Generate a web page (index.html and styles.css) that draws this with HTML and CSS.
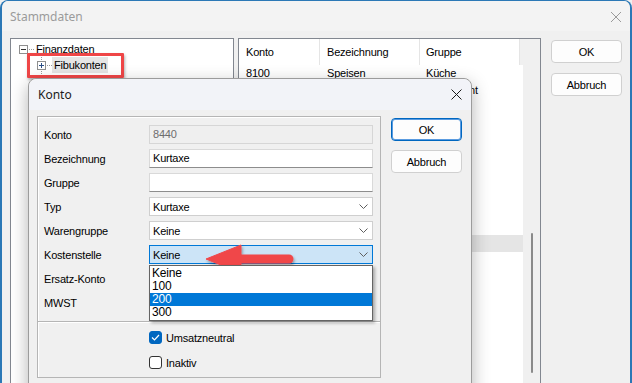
FILE: index.html
```html
<!DOCTYPE html>
<html lang="de">
<head>
    <meta charset="UTF-8">
    <meta name="viewport" content="width=device-width, initial-scale=1.0">
    <title>Stammdaten</title>
    <link rel="stylesheet" href="styles.css">
</head>
<body>
    <div class="window">
        <div class="titlebar">
            <span class="title">Stammdaten</span>
            <svg class="close-icon" width="12" height="12" viewBox="0 0 12 12"><path d="M1 1L11 11M11 1L1 11" stroke="#9a9a9a" stroke-width="1"/></svg>
        </div>
        <div class="window-body">
            <div class="tree">
                <div class="tree-item level-0">
                    <span class="gutter">
                        <svg width="9" height="9" viewBox="0 0 9 9"><rect x="0.5" y="0.5" width="8" height="8" fill="#fff" stroke="#8f8f8f"/><path d="M2 4.5H7" stroke="#333"/></svg>
                    </span>
                    <span class="stub"></span>
                    <span class="tree-label">Finanzdaten</span>
                </div>
                <div class="tree-item level-1">
                    <span class="gutter line">
                        <svg width="9" height="9" viewBox="0 0 9 9"><rect x="0.5" y="0.5" width="8" height="8" fill="#fff" stroke="#8f8f8f"/><path d="M2 4.5H7M4.5 2V7" stroke="#2b4f86"/></svg>
                    </span>
                    <span class="stub"></span>
                    <span class="tree-label selected">Fibukonten</span>
                </div>
                <div class="tree-item level-1">
                    <span class="gutter line">
                        <svg width="9" height="9" viewBox="0 0 9 9"><rect x="0.5" y="0.5" width="8" height="8" fill="#fff" stroke="#8f8f8f"/><path d="M2 4.5H7M4.5 2V7" stroke="#2b4f86"/></svg>
                    </span>
                    <span class="stub"></span>
                    <span class="tree-label"></span>
                </div>
            </div>

            <div class="list">
                <div class="list-main">
                    <div class="list-head">
                        <span class="cell col-1">Konto</span>
                        <span class="cell col-2">Bezeichnung</span>
                        <span class="cell col-3">Gruppe</span>
                        <span class="head-filler"></span>
                    </div>
                    <div class="list-row"><span class="cell col-1">8100</span><span class="cell col-2">Speisen</span><span class="cell col-3">Küche</span></div>
                    <div class="list-row"><span class="cell col-1"></span><span class="cell col-2"></span><span class="cell col-3">Restaurant</span></div>
                    <div class="list-row"></div>
                    <div class="list-row"></div>
                    <div class="list-row"></div>
                    <div class="list-row"></div>
                    <div class="list-row"></div>
                    <div class="list-row"></div>
                    <div class="list-row"></div>
                    <div class="list-row"></div>
                    <div class="list-row selected"></div>
                </div>
                <div class="scrollbar">
                    <div class="scroll-thumb"></div>
                </div>
            </div>

            <div class="side-buttons">
                <button class="win-button">OK</button>
                <button class="win-button">Abbruch</button>
            </div>
        </div>
    </div>

    <div class="annotation-box"></div>

    <div class="dialog">
        <div class="dialog-title">
            <span>Konto</span>
            <svg width="11" height="11" viewBox="0 0 11 11"><path d="M0.5 0.5L10.5 10.5M10.5 0.5L0.5 10.5" stroke="#1b1b1b" stroke-width="1"/></svg>
        </div>
        <div class="dialog-body">
            <div class="group">
                <div class="form-row">
                    <label class="form-label">Konto</label>
                    <div class="field disabled">8440</div>
                </div>
                <div class="form-row">
                    <label class="form-label">Bezeichnung</label>
                    <div class="field">Kurtaxe</div>
                </div>
                <div class="form-row">
                    <label class="form-label">Gruppe</label>
                    <div class="field"></div>
                </div>
                <div class="form-row">
                    <label class="form-label">Typ</label>
                    <div class="combo"><span>Kurtaxe</span><svg width="9" height="5" viewBox="0 0 9 5"><path d="M0.5 0.5L4.5 4.5L8.5 0.5" fill="none" stroke="#5f5f5f"/></svg></div>
                </div>
                <div class="form-row">
                    <label class="form-label">Warengruppe</label>
                    <div class="combo"><span>Keine</span><svg width="9" height="5" viewBox="0 0 9 5"><path d="M0.5 0.5L4.5 4.5L8.5 0.5" fill="none" stroke="#5f5f5f"/></svg></div>
                </div>
                <div class="form-row open">
                    <label class="form-label">Kostenstelle</label>
                    <div class="combo focused"><span>Keine</span><svg width="9" height="5" viewBox="0 0 9 5"><path d="M0.5 0.5L4.5 4.5L8.5 0.5" fill="none" stroke="#5f5f5f"/></svg></div>
                    <div class="dropdown">
                        <div class="dropdown-item">Keine</div>
                        <div class="dropdown-item">100</div>
                        <div class="dropdown-item active">200</div>
                        <div class="dropdown-item">300</div>
                    </div>
                </div>
                <div class="form-row">
                    <label class="form-label">Ersatz-Konto</label>
                    <div class="combo"><span></span></div>
                </div>
                <div class="form-row">
                    <label class="form-label">MWST</label>
                    <div class="combo"><span></span></div>
                </div>
                <div class="separator"></div>
                <div class="check-list">
                    <div class="check-row">
                        <span class="checkbox checked"><svg width="9" height="7" viewBox="0 0 9 7"><path d="M1 3.5L3.5 6L8 1" fill="none" stroke="#fff" stroke-width="1.2"/></svg></span>
                        <span>Umsatzneutral</span>
                    </div>
                    <div class="check-row">
                        <span class="checkbox"></span>
                        <span>Inaktiv</span>
                    </div>
                </div>
            </div>
            <div class="dialog-buttons">
                <button class="win-button default">OK</button>
                <button class="win-button">Abbruch</button>
            </div>
        </div>
    </div>

    <svg class="annotation-arrow" width="632" height="383" viewBox="0 0 632 383">
        <defs>
            <filter id="arrow-shadow" x="-10%" y="-50%" width="130%" height="200%">
                <feDropShadow dx="1" dy="2" stdDeviation="1.5" flood-color="#000" flood-opacity="0.35"/>
            </filter>
        </defs>
        <g filter="url(#arrow-shadow)" fill="#f0474a" stroke="#f0474a">
            <path d="M236 259H289" stroke-width="9" stroke-linecap="round"/>
            <path d="M206 259L241 245L241 273Z" stroke-width="1" stroke-linejoin="round"/>
        </g>
    </svg>
</body>
</html>
```

FILE: styles.css
```css
    * {
        box-sizing: border-box;
    }
    body {
        margin: 0;
        width: 632px;
        height: 383px;
        overflow: hidden;
        position: relative;
        font-family: 'Liberation Sans', Arial, sans-serif;
        font-size: 11px;
        letter-spacing: -0.2px;
        color: #000;
        background: #f0f0f0;
    }
    button {
        font-family: inherit;
        font-size: 11px;
        letter-spacing: inherit;
        color: #000;
        padding: 0;
    }

    /* outer window */
    .window {
        width: 632px;
        height: 383px;
        border: 2px solid #2b78b6;
        border-top-width: 1px;
        border-bottom: none;
        border-radius: 8px 8px 0 0;
        background: #f0f0f0;
        display: flex;
        flex-direction: column;
        overflow: hidden;
    }
    .titlebar {
        height: 30px;
        flex-shrink: 0;
        background: #f3f3f3;
        display: flex;
        align-items: center;
        justify-content: space-between;
        padding: 0 8px 0 8px;
    }
    .title {
        font-family: 'Noto Sans', 'Liberation Sans', sans-serif;
        font-size: 12px;
        letter-spacing: 0;
        color: #9b9b9b;
    }
    .close-icon {
        margin-top: 1px;
    }
    .window-body {
        flex: 1;
        display: flex;
        padding: 7px 8px 0 8px;
        min-height: 0;
    }

    /* tree */
    .tree {
        width: 224px;
        background: #fff;
        border: 1px solid #828790;
        border-bottom: none;
        padding-top: 2px;
    }
    .tree-item {
        height: 16px;
        display: flex;
        align-items: center;
    }
    .tree-item.level-0 {
        padding-left: 8px;
    }
    .tree-item.level-1 {
        padding-left: 26px;
    }
    .gutter {
        width: 9px;
        height: 16px;
        display: flex;
        align-items: center;
        justify-content: center;
    }
    .gutter svg {
        display: block;
        position: relative;
    }
    .gutter.line {
        background: repeating-linear-gradient(to bottom, #9a9a9a 0 1px, transparent 1px 2px) center / 1px 100% no-repeat;
    }
    .stub {
        width: 5px;
        margin-left: 1px;
        border-top: 1px dotted #9a9a9a;
    }
    .tree-label {
        padding: 0 2px;
        line-height: 16px;
        white-space: nowrap;
    }
    .tree-label.selected {
        background: #e5e5e5;
    }

    /* list */
    .list {
        width: 303px;
        margin-left: 4px;
        background: #fff;
        border: 1px solid #828790;
        border-bottom: none;
        display: flex;
    }
    .list-main {
        flex: 1;
    }
    .list-head {
        height: 26px;
        display: flex;
    }
    .list-head .cell {
        line-height: 26px;
        border-right: 1px solid #e5e5e5;
    }
    .head-filler {
        flex: 1;
        background: #f0f0f0;
    }
    .list-row {
        height: 17px;
        display: flex;
    }
    .list-row.selected {
        background: #e5e5e5;
    }
    .cell {
        padding-left: 7px;
        line-height: 17px;
        white-space: nowrap;
        overflow: hidden;
    }
    .col-1 {
        width: 81px;
    }
    .col-2 {
        width: 100px;
    }
    .col-3 {
        width: 100px;
        padding-left: 6px;
    }
    .scrollbar {
        width: 17px;
        background: #f0f0f0;
        display: flex;
        justify-content: center;
        padding-left: 1px;
    }
    .scroll-thumb {
        width: 2px;
        height: 140px;
        margin-top: 194px;
        background: #8a8a8a;
        border-radius: 1px;
    }

    .side-buttons {
        margin-left: 10px;
        padding-top: 2px;
        display: flex;
        flex-direction: column;
        gap: 10px;
    }
    .win-button {
        width: 71px;
        height: 23px;
        background: #fdfdfd;
        border: 1px solid #d0d0d0;
        border-radius: 4px;
    }
    .win-button.default {
        border-color: #0067c0;
        box-shadow: inset 0 0 0 1px #5a9be0;
    }

    /* red marker around the tree node */
    .annotation-box {
        position: absolute;
        left: 27px;
        top: 53px;
        width: 97px;
        height: 25px;
        border: 3px solid #ef4647;
        border-radius: 1px;
        box-shadow: 1px 2px 3px rgba(0, 0, 0, 0.3);
    }

    /* Konto dialog */
    .dialog {
        position: absolute;
        left: 28px;
        top: 78px;
        width: 444px;
        height: 320px;
        background: #f0f0f0;
        border: 1px solid #9c9c9c;
        border-radius: 8px 8px 0 0;
        box-shadow: 0 6px 18px rgba(0, 0, 0, 0.3);
    }
    .dialog-title {
        height: 31px;
        background: #f2f3f8;
        border-radius: 8px 8px 0 0;
        display: flex;
        align-items: center;
        justify-content: space-between;
        padding: 0 9px 0 9px;
        font-family: 'Noto Sans', 'Liberation Sans', sans-serif;
        font-size: 12px;
        letter-spacing: 0;
        color: #1b1b1b;
    }
    .dialog-body {
        display: flex;
        padding: 6px 9px 0 8px;
        gap: 10px;
    }
    .group {
        width: 344px;
        border: 1px solid #b5b5b5;
        box-shadow: inset 1px 1px 0 #fff;
        padding: 8px 7px 8px 6px;
        display: flex;
        flex-direction: column;
        gap: 5px;
    }
    .form-row {
        height: 19px;
        display: flex;
        align-items: center;
        position: relative;
    }
    .form-label {
        width: 105px;
        flex-shrink: 0;
    }
    .field {
        flex: 1;
        height: 19px;
        background: #fff;
        border: 1px solid #d9d9d9;
        border-bottom-color: #8d8d8d;
        padding-left: 3px;
        line-height: 17px;
    }
    .field.disabled {
        background: #efefef;
        border-color: #d6d6d6;
        color: #6d6d6d;
    }
    .combo {
        flex: 1;
        height: 19px;
        background: #fff;
        border: 1px solid #cfcfcf;
        display: flex;
        align-items: center;
        justify-content: space-between;
        padding: 0 4px 0 3px;
    }
    .combo.focused {
        background: #cce4f7;
        border-color: #0078d7;
    }
    .dropdown {
        position: absolute;
        left: 105px;
        right: 0;
        top: 20px;
        height: 56px;
        background: #fff;
        border: 1px solid #646464;
        padding: 1px 0;
        box-shadow: 2px 2px 3px rgba(0, 0, 0, 0.3);
        z-index: 2;
        font-size: 12px;
    }
    .dropdown-item {
        height: 13px;
        line-height: 13px;
        padding-left: 2px;
    }
    .dropdown-item.active {
        background: #0078d7;
        color: #fff;
    }
    .separator {
        margin: 4px -7px 3px -6px;
        height: 2px;
        border-top: 1px solid #b5b5b5;
        border-bottom: 1px solid #fff;
    }
    .check-list {
        display: flex;
        flex-direction: column;
        gap: 12px;
        padding-left: 105px;
    }
    .check-row {
        height: 13px;
        display: flex;
        align-items: center;
        gap: 4px;
    }
    .checkbox {
        width: 13px;
        height: 13px;
        border: 1px solid #333;
        border-radius: 3px;
        background: #fff;
        display: flex;
        align-items: center;
        justify-content: center;
    }
    .checkbox.checked {
        background: #0067c0;
        border-color: #0067c0;
    }
    .dialog-buttons {
        padding-top: 2px;
        display: flex;
        flex-direction: column;
        gap: 9px;
    }

    .annotation-arrow {
        position: absolute;
        left: 0;
        top: 0;
        pointer-events: none;
    }
```
